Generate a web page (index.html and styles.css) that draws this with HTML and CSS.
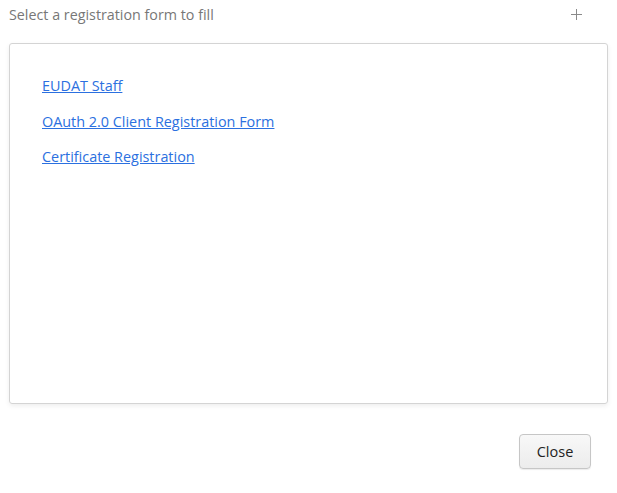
FILE: index.html
```html
<!DOCTYPE html>
<html>
<head>
<meta charset="utf-8">
<link rel="stylesheet" href="styles.css">
</head>
<body>
<div class="dialog">
  <div class="header">
    <span class="title">Select a registration form to fill</span>
    <svg class="plus" width="11" height="11" viewBox="0 0 11 11" aria-label="add"><path d="M5.5 0V11M0 5.5H11" stroke="#8a8a8a" stroke-width="1" fill="none"/></svg>
  </div>
  <div class="panel">
    <a href="#" class="form-link">EUDAT Staff</a>
    <a href="#" class="form-link">OAuth 2.0 Client Registration Form</a>
    <a href="#" class="form-link">Certificate Registration</a>
  </div>
  <div class="footer">
    <button class="btn">Close</button>
  </div>
</div>
</body>
</html>
```

FILE: styles.css
```css
html, body {
  margin: 0;
  padding: 0;
  background: #fff;
}
body {
  font-family: "Open Sans", "Noto Sans", sans-serif;
}
.dialog {
  width: 617px;
  height: 493px;
  padding: 0 9px;
  box-sizing: border-box;
  display: flex;
  flex-direction: column;
}
.header {
  display: flex;
  justify-content: space-between;
  align-items: center;
  height: 29px;
  margin-bottom: 14px;
}
.title {
  color: #777;
  font-size: 14.3px;
}
.plus {
  margin-right: 26px;
}
.panel {
  height: 361px;
  box-sizing: border-box;
  border: 1px solid #d4d4d4;
  border-radius: 3px;
  box-shadow: 0 2px 5px rgba(0, 0, 0, 0.07);
  padding: 31px 32px;
  display: flex;
  flex-direction: column;
  align-items: flex-start;
  gap: 14px;
}
.form-link {
  color: #2b70e0;
  font-size: 14.4px;
  line-height: 22px;
  text-decoration: underline;
}
.form-link + .form-link {
  margin-top: -0.5px;
}
.footer {
  display: flex;
  justify-content: flex-end;
  padding-top: 30px;
  padding-right: 17px;
}
.btn {
  width: 72px;
  height: 35px;
  font-family: "Open Sans", "Noto Sans", sans-serif;
  font-size: 14.5px;
  line-height: 33px;
  padding: 0 0 2px;
  color: #222;
  background: linear-gradient(#f8f8f8, #ececec);
  border: 1px solid #c6c6c6;
  border-radius: 4px;
  box-shadow: 0 1px 1px rgba(0,0,0,0.08);
}
```
